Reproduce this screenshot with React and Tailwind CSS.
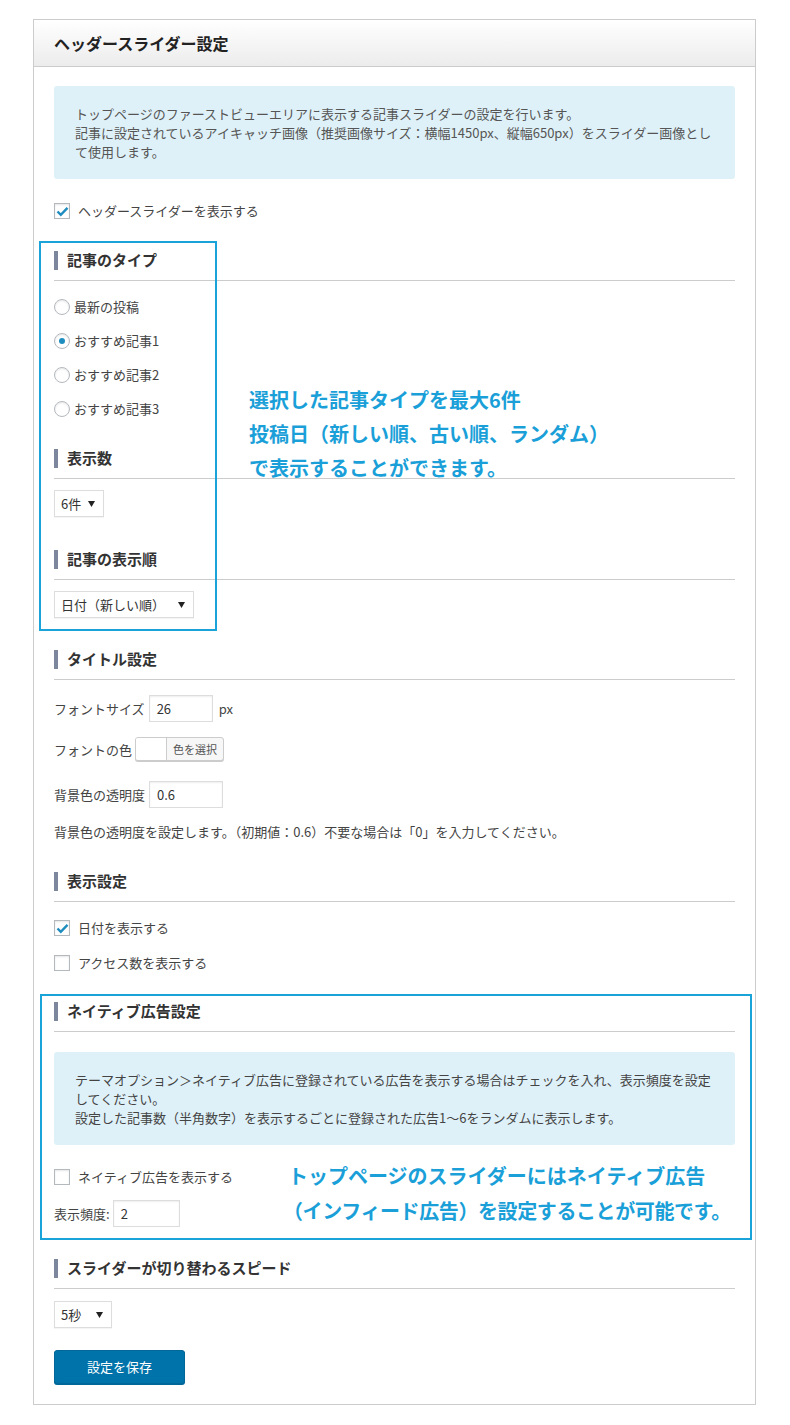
import React from 'react';

const FONT = { fontFamily: '"Noto Sans CJK JP", "Noto Sans", sans-serif' };

function Heading({ children, className = '' }) {
    return (
        <div className={`border-b border-[#ccc] pb-[10px] ${className}`}>
            <div className="flex items-center h-[20px]">
                <span className="w-[4px] h-[19px] bg-[#7c869c] mr-[9px]" />
                <span className="text-[15px] font-bold text-[#333] leading-[20px]">{children}</span>
            </div>
        </div>
    );
}

function Checkbox({ checked, label, className = '' }) {
    return (
        <div className={`flex items-center h-[16px] ${className}`}>
            <span className="w-[16px] h-[16px] border border-[#b4b9be] bg-white flex items-center justify-center shadow-[inset_0_1px_2px_rgba(0,0,0,0.1)]">
                {checked && (
                    <svg width="13" height="11" viewBox="0 0 13 11">
                        <path d="M1.5 5.5 L4.8 8.8 L11.5 1.8" fill="none" stroke="#1e8cbe" strokeWidth="2.4" />
                    </svg>
                )}
            </span>
            <span className="ml-[8px] text-[13px] text-[#444] leading-[16px]">{label}</span>
        </div>
    );
}

function Radio({ checked, label }) {
    return (
        <div className="flex items-center h-[16px] mt-[18px]">
            <span className="w-[16px] h-[16px] rounded-full border border-[#b4b9be] bg-white flex items-center justify-center shadow-[inset_0_1px_2px_rgba(0,0,0,0.1)]">
                {checked && <span className="w-[6px] h-[6px] rounded-full bg-[#1e8cbe]" />}
            </span>
            <span className="ml-[4px] text-[13px] text-[#444] leading-[16px]">{label}</span>
        </div>
    );
}

function Select({ value, width, className = '' }) {
    return (
        <div
            className={`h-[27px] border border-[#ddd] bg-white flex items-center justify-between pl-[6px] pr-[8px] text-[13px] text-[#333] shadow-[0_1px_1px_rgba(0,0,0,0.04)] ${width} ${className}`}
        >
            <span>{value}</span>
            <svg width="7" height="6" viewBox="0 0 7 6">
                <path d="M0 0 H7 L3.5 6 Z" fill="#222" />
            </svg>
        </div>
    );
}

function Input({ value, width }) {
    return (
        <div className={`h-[27px] border border-[#ddd] bg-white flex items-center pl-[7px] text-[13px] text-[#333] shadow-[inset_0_1px_2px_rgba(0,0,0,0.07)] ${width}`}>
            {value}
        </div>
    );
}

export default function App() {
    return (
        <div className="bg-white min-h-screen pl-[33px] pt-[19px] pb-[19px]" style={FONT}>
            <div className="relative w-[723px] border border-[#ccc] bg-white">
                <div className="h-[47px] border-b border-[#ccc] bg-gradient-to-b from-white to-[#ececec] flex items-center px-[20px]">
                    <h1 className="text-[16px] font-bold text-[#222]">ヘッダースライダー設定</h1>
                </div>

                <div className="px-[20px] pt-[19px] pb-[20px]">
                    <div className="rounded-[3px] bg-[#dff1f8] px-[21px] py-[18px] text-[13px] leading-[19px] text-[#555]">
                        <p>トップページのファーストビューエリアに表示する記事スライダーの設定を行います。</p>
                        <p>記事に設定されているアイキャッチ画像（推奨画像サイズ：横幅1450px、縦幅650px）をスライダー画像として使用します。</p>
                    </div>

                    <Checkbox checked label="ヘッダースライダーを表示する" className="mt-[24px]" />

                    <Heading className="mt-[31px]">記事のタイプ</Heading>
                    <Radio label="最新の投稿" />
                    <Radio checked label="おすすめ記事1" />
                    <Radio label="おすすめ記事2" />
                    <Radio label="おすすめ記事3" />

                    <Heading className="mt-[31px]">表示数</Heading>
                    <Select value="6件" width="w-[50px]" className="mt-[11px]" />

                    <Heading className="mt-[32px]">記事の表示順</Heading>
                    <Select value="日付（新しい順）" width="w-[140px]" className="mt-[11px]" />

                    <Heading className="mt-[31px]">タイトル設定</Heading>
                    <div className="mt-[15px] flex items-center text-[13px] text-[#444]">
                        <span className="mr-[4px]">フォントサイズ</span>
                        <Input value="26" width="w-[64px]" />
                        <span className="ml-[6px]">px</span>
                    </div>
                    <div className="mt-[15px] flex items-center text-[13px] text-[#444]">
                        <span className="mr-[3px] pt-[2px]">フォントの色</span>
                        <div className="h-[24px] w-[89px] flex border border-[#ccc] rounded-[3px] bg-[#f7f7f7] shadow-[0_1px_0_#ccc] overflow-hidden">
                            <span className="w-[31px] bg-white border-r border-[#ccc]" />
                            <span className="flex-1 flex items-center justify-center text-[11px] text-[#555]">色を選択</span>
                        </div>
                    </div>
                    <div className="mt-[20px] flex items-center text-[13px] text-[#444]">
                        <span className="mr-[4px]">背景色の透明度</span>
                        <Input value="0.6" width="w-[74px]" />
                    </div>
                    <p className="mt-[14px] text-[13px] leading-[19px] text-[#444]">
                        背景色の透明度を設定します。（初期値：0.6）不要な場合は「0」を入力してください。
                    </p>

                    <Heading className="mt-[30px]">表示設定</Heading>
                    <Checkbox checked label="日付を表示する" className="mt-[18px]" />
                    <Checkbox label="アクセス数を表示する" className="mt-[19px]" />

                    <Heading className="mt-[30px]">ネイティブ広告設定</Heading>
                    <div className="mt-[20px] rounded-[3px] bg-[#dff1f8] pl-[21px] pr-[18px] py-[18px] text-[13px] leading-[19px] text-[#444]">
                        <p>テーマオプション＞ネイティブ広告に登録されている広告を表示する場合はチェックを入れ、表示頻度を設定してください。</p>
                        <p>設定した記事数（半角数字）を表示するごとに登録された広告1～6をランダムに表示します。</p>
                    </div>
                    <Checkbox label="ネイティブ広告を表示する" className="mt-[24px]" />
                    <div className="mt-[15px] flex items-center text-[13px] text-[#444]">
                        <span className="mr-[3px]">表示頻度:</span>
                        <Input value="2" width="w-[67px]" />
                    </div>

                    <Heading className="mt-[31px]">スライダーが切り替わるスピード</Heading>
                    <Select value="5秒" width="w-[58px]" className="mt-[12px]" />

                    <button className="mt-[22px] h-[34px] w-[131px] rounded-[3px] bg-[#0073aa] border border-[#006799] text-white text-[13px] shadow-[0_1px_0_#006799]">
                        設定を保存
                    </button>
                </div>

                {/* annotation overlays */}
                <div className="absolute left-[5px] top-[221px] w-[178px] h-[390px] border-2 border-[#1aa3d9] pointer-events-none" />
                <div className="absolute left-[215px] top-[363px] text-[20px] font-bold leading-[34px] text-[#1a9fd8]">
                    <p>選択した記事タイプを最大6件</p>
                    <p>投稿日（新しい順、古い順、ランダム）</p>
                    <p>で表示することができます。</p>
                </div>
                <div className="absolute left-[6px] top-[974px] w-[712px] h-[246px] border-2 border-[#1aa3d9] pointer-events-none" />
                <div className="absolute left-[252px] top-[1138px] text-[20px] font-bold leading-[35px] text-[#1a9fd8]">
                    <p className="pl-[2px]">トップページのスライダーにはネイティブ広告</p>
                    <p className="tracking-[-0.4px] -ml-[3px]">（インフィード広告）を設定することが可能です。</p>
                </div>
            </div>
        </div>
    );
}
